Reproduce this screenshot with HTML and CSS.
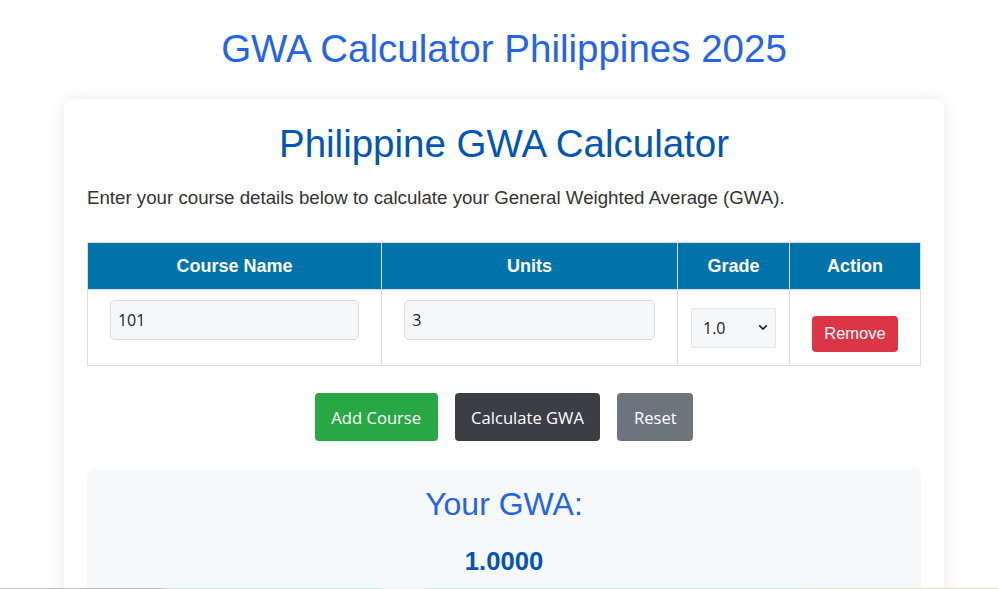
FILE: index.html
```html
<!DOCTYPE html>
<html lang="en">
<head>
    <meta charset="UTF-8">
    <meta name="viewport" content="width=device-width, initial-scale=1.0">
    <title>GWA Calculator Philippines 2025</title>
    <link rel="stylesheet" href="styles.css">
</head>
<body>
    <h1 class="page-title">GWA Calculator Philippines 2025</h1>

    <div class="gwa-card">
        <h2 class="gwa-heading">Philippine GWA Calculator</h2>
        <p class="gwa-intro">Enter your course details below to calculate your General Weighted Average (GWA).</p>

        <table class="gwa-table">
            <thead>
                <tr>
                    <th class="col-name">Course Name</th>
                    <th class="col-units">Units</th>
                    <th class="col-grade">Grade</th>
                    <th class="col-action">Action</th>
                </tr>
            </thead>
            <tbody id="courseRows">
                <tr>
                    <td><input type="text" class="gwa-input" value="101"></td>
                    <td><input type="number" class="gwa-input" value="3"></td>
                    <td>
                        <select class="gwa-select">
                            <option selected>1.0</option>
                            <option>1.25</option>
                            <option>1.5</option>
                            <option>1.75</option>
                            <option>2.0</option>
                            <option>2.25</option>
                            <option>2.5</option>
                            <option>2.75</option>
                            <option>3.0</option>
                            <option>5.0</option>
                        </select>
                    </td>
                    <td><button class="btn btn-remove">Remove</button></td>
                </tr>
            </tbody>
        </table>

        <div class="gwa-actions">
            <button class="btn btn-add">Add Course</button>
            <button class="btn btn-calc">Calculate GWA</button>
            <button class="btn btn-reset">Reset</button>
        </div>

        <div class="gwa-result">
            <h3 class="result-label">Your GWA:</h3>
            <div class="result-value" id="gwaValue">1.0000</div>
        </div>
    </div>

    <div class="bottom-strip"></div>
</body>
</html>
```

FILE: styles.css
```css
* { box-sizing: border-box; }
body { margin: 0; padding: 0 0 40px 10px; background: #fff; font-family: "Liberation Sans", Arial, sans-serif; color: #333; }

.page-title { margin: 27px 0 28px; text-align: center; font-size: 38.5px; font-weight: 400; color: #2563eb; line-height: 44px; }

.gwa-card { max-width: 880px; margin: 0 auto; padding: 23px 23px 30px; background: #fff; border-radius: 10px; box-shadow: 0 0 16px rgba(0, 0, 0, 0.09); }
.gwa-heading { margin: 0; text-align: center; font-size: 38.5px; font-weight: 400; color: #0056b3; line-height: 44px; }
.gwa-intro { margin: 22px 0 34px; font-size: 18.7px; line-height: 20px; color: #333; }

.gwa-table { width: 100%; border-collapse: collapse; }
.gwa-table th, .gwa-table td { border: 1px solid #ddd; text-align: center; }
.gwa-table th { padding: 12px; background: #0073aa; color: #fff; font-size: 18px; font-weight: 700; line-height: 22px; }
.gwa-table td { padding: 10px 0; vertical-align: middle; }
.col-name { width: 294px; }
.col-units { width: 296px; }
.col-grade { width: 112px; }

.gwa-input { display: block; width: 85%; height: 40px; margin: 0 auto 15px; padding: 0 7px; background: #f6f7f9; border: 1px solid #dcdcdc; border-radius: 5px; font-family: "Open Sans", sans-serif; font-size: 16px; color: #222; }
.gwa-input::-webkit-inner-spin-button { -webkit-appearance: none; }
.gwa-input[type=number] { -moz-appearance: textfield; }

.gwa-select { width: 85px; height: 40px; padding: 0 11px; background: #f6f7f9 url("data:image/svg+xml,%3Csvg xmlns='http://www.w3.org/2000/svg' width='12' height='8' viewBox='0 0 12 8'%3E%3Cpath d='M1.5 1.5l4.5 4.5 4.5-4.5' fill='none' stroke='%23222' stroke-width='2'/%3E%3C/svg%3E") no-repeat right 7px center / 10px 7px; border: 1px solid #e6e6e6; border-radius: 2px; -webkit-appearance: none; appearance: none; font-family: "Open Sans", sans-serif; font-size: 16px; color: #222; }

.btn { border: none; border-radius: 4px; color: #fff; cursor: pointer; }
.btn-remove { margin-top: 12px; height: 36px; padding: 0 12px; background: #dc3545; font-family: "Liberation Sans", Arial, sans-serif; font-size: 16.5px; }

.gwa-actions { display: flex; justify-content: center; gap: 17px; margin-top: 27px; }
.gwa-actions .btn { height: 48px; padding: 0 16.5px; font-family: "Open Sans", sans-serif; font-size: 16.6px; }
.btn-add { background: #28a745; }
.btn-calc { background: #3c3d45; }
.btn-reset { background: #6c757d; }

.gwa-result { margin-top: 28px; padding: 17px 20px 20px; background: #f7f8fa; border-radius: 8px; text-align: center; }
.result-label { margin: 0; font-size: 32px; font-weight: 400; color: #2563eb; line-height: 36px; }
.result-value { margin-top: 25px; font-size: 25.6px; font-weight: 700; color: #0056b3; }

.bottom-strip { position: fixed; left: 0; right: 0; bottom: 0; height: 1px; background: linear-gradient(to right, #c6c6c6 0, #c6c6c6 165px, #c4e8e8 165px, #c4e8e8 380px, #e6eeee 380px, #e6eeee 430px, #c4e8e8 430px, #c4e8e8 800px, #ddddc8 800px); }
```
